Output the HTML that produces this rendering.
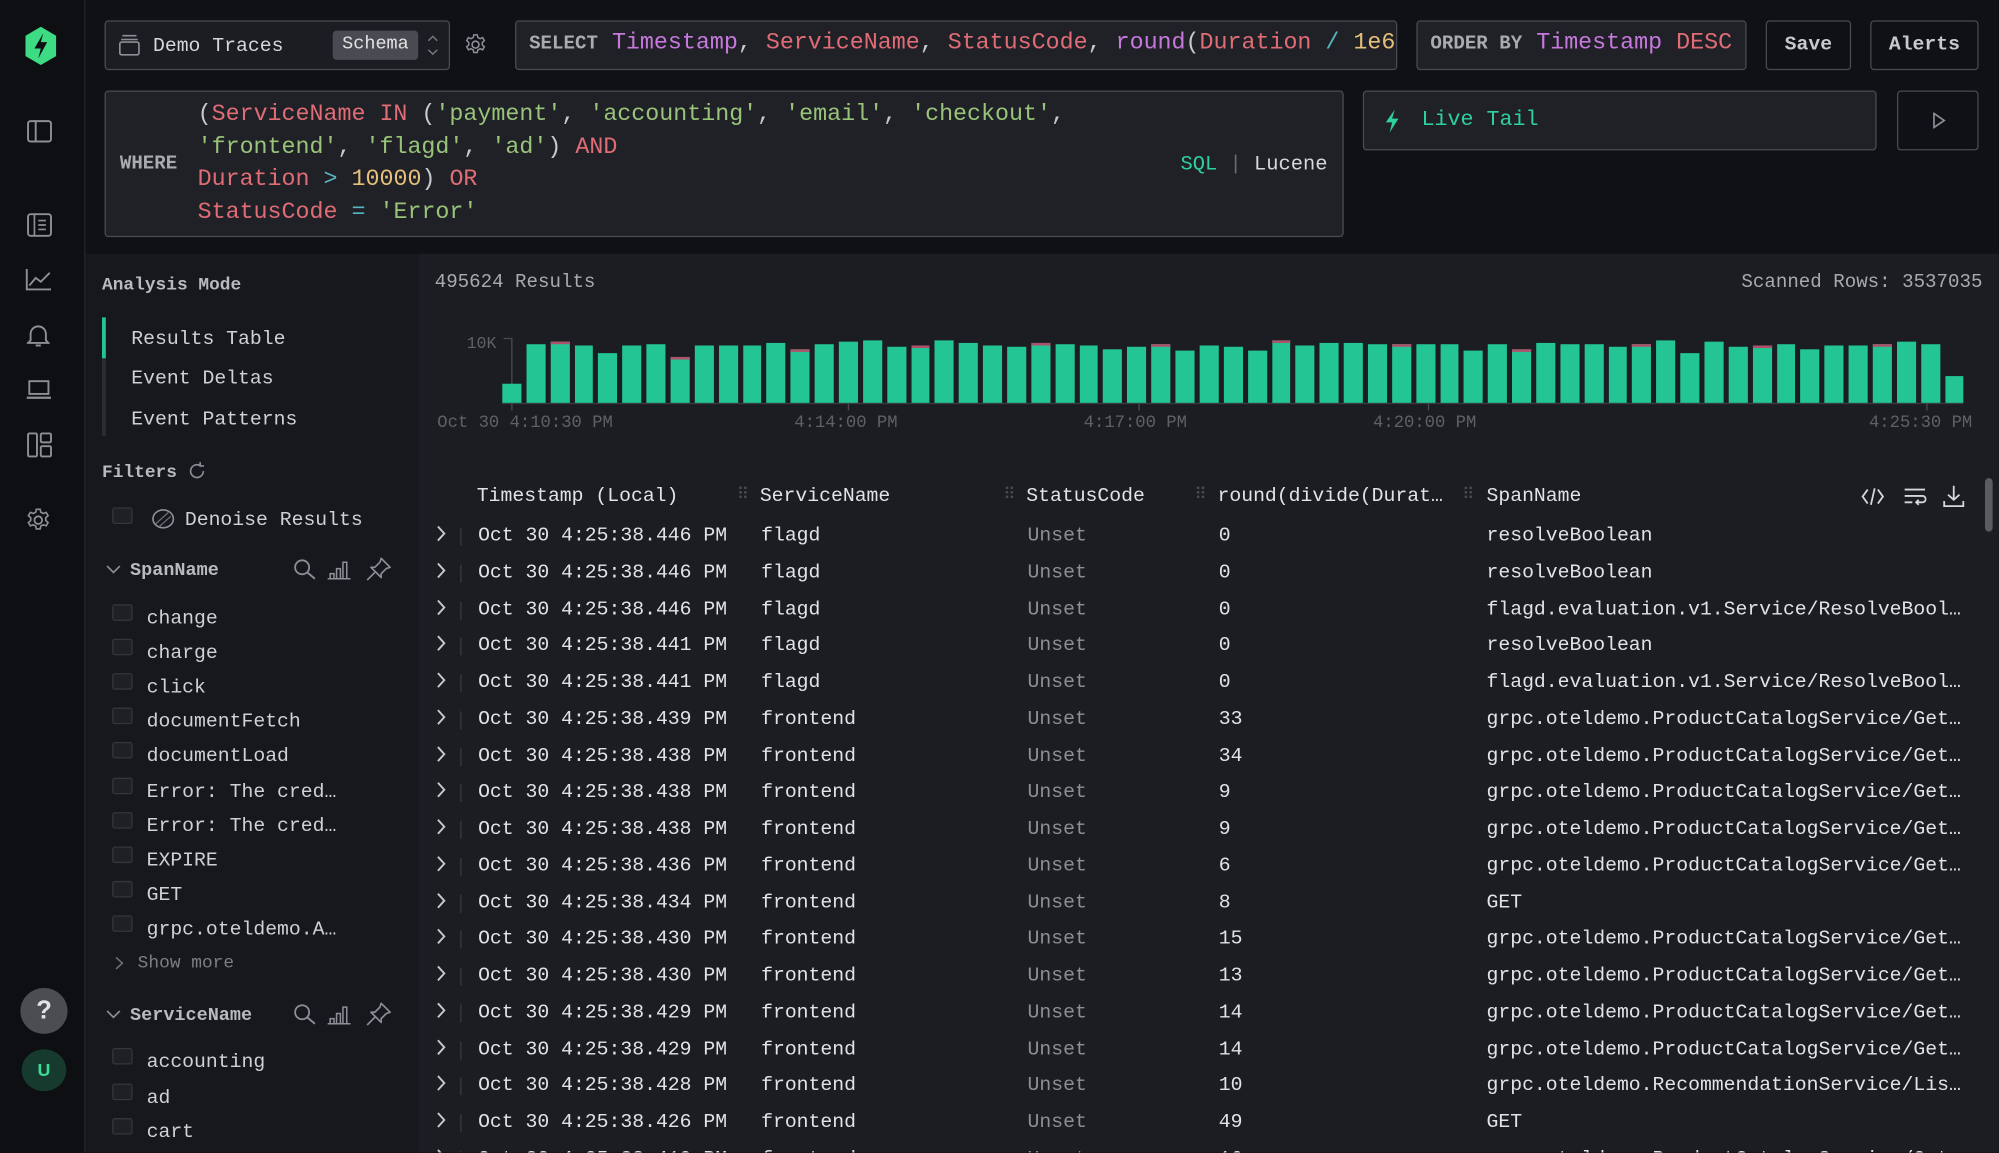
<!DOCTYPE html>
<html><head><meta charset="utf-8"><style>
*{box-sizing:border-box;margin:0;padding:0}
html,body{width:1999px;height:1153px;overflow:hidden;background:#0f1116}
#w{position:absolute;left:0;top:0;width:1568px;height:904px;transform:scale(1.27487);transform-origin:0 0;background:#0f1116;font-family:"Liberation Mono",monospace;color:#d6d7da;overflow:hidden}
.a{position:absolute;white-space:nowrap}
.box{position:absolute;background:#202127;border:1px solid #4a4b50;border-radius:3px}
.kw{color:#a9abb0;font-weight:bold}
.p{color:#c678dd}.r{color:#e06c75}.g{color:#98c379}.y{color:#e5c07b}.t{color:#56b6c2}.w{color:#c8c9cc}
.nav{position:absolute;left:0;top:0;width:67px;height:904px;background:#0d0f12;border-right:1px solid #24262b}
.lp{position:absolute;left:67px;top:199px;width:261px;height:705px;background:#16181d}
.mp{position:absolute;left:328px;top:199px;width:1240px;height:705px;background:#1b1d23}
.cb{position:absolute;width:16px;height:13px;border:1px solid #34363c;background:#1e2026;border-radius:2px}
.it{font-size:15.5px;color:#d0d1d4}
.row{position:absolute;left:338px;font-size:15.5px;color:#e2e3e6;height:28px;width:1210px}
.row span{position:absolute;top:0}
</style></head><body><div id="w">

<div class="nav">
 <svg class="a" style="left:19px;top:20px" width="26" height="32" viewBox="0 0 26 32"><polygon points="13,1 25,8 25,24 13,31 1,24 1,8" fill="#3ddc84"/><path d="M15 6 L8 18 H13 L11 26 L18 13 H13 Z" fill="#0d0f12"/></svg>
 <svg class="a" style="left:21px;top:94px" width="20" height="18"><rect x="1" y="1" width="18" height="16" rx="2" fill="none" stroke="#8c8f95" stroke-width="1.5"/><line x1="7" y1="1" x2="7" y2="17" stroke="#8c8f95" stroke-width="1.5"/></svg>
 <svg class="a" style="left:21px;top:167px" width="20" height="19"><rect x="1" y="1" width="18" height="17" rx="2" fill="none" stroke="#8c8f95" stroke-width="1.5"/><path d="M6 1V18M9 6H15M9 9.5H15M9 13H15" stroke="#8c8f95" stroke-width="1.3"/></svg>
 <svg class="a" style="left:20px;top:210px" width="21" height="18"><path d="M1 1V17H20M3 14L8 8L12 11L19 4" fill="none" stroke="#8c8f95" stroke-width="1.5"/></svg>
 <svg class="a" style="left:21px;top:253px" width="18" height="20"><path d="M3 14V9a6 6 0 0 1 12 0v5l2 2H1z M7 18h4" fill="none" stroke="#8c8f95" stroke-width="1.5"/></svg>
 <svg class="a" style="left:20px;top:298px" width="21" height="16"><rect x="3" y="1" width="15" height="10" fill="none" stroke="#8c8f95" stroke-width="1.5"/><path d="M1 14H20" stroke="#8c8f95" stroke-width="1.8"/></svg>
 <svg class="a" style="left:21px;top:339px" width="20" height="20"><rect x="1" y="1" width="7" height="18" rx="1" fill="none" stroke="#8c8f95" stroke-width="1.5"/><rect x="11" y="1" width="8" height="7" rx="1" fill="none" stroke="#8c8f95" stroke-width="1.5"/><rect x="11" y="11" width="8" height="8" rx="1" fill="none" stroke="#8c8f95" stroke-width="1.5"/></svg>
 <svg class="a" style="left:20px;top:398px" width="20" height="20" viewBox="0 0 20 20"><circle cx="10" cy="10" r="3" fill="none" stroke="#8c8f95" stroke-width="1.4"/><path d="M8.5 1.5h3l.5 2.3 2 1 2.2-.9 1.5 2.6-1.8 1.6v2.2l1.8 1.6-1.5 2.6-2.2-.9-2 1-.5 2.3h-3l-.5-2.3-2-1-2.2.9-1.5-2.6 1.8-1.6V8.1L2.3 6.5l1.5-2.6 2.2.9 2-1z" fill="none" stroke="#8c8f95" stroke-width="1.3"/></svg>
 <div class="a" style="left:16px;top:775px;width:37px;height:36px;border-radius:50%;background:#4b4d53;color:#e4e4e6;font:bold 20px 'Liberation Sans',sans-serif;text-align:center;line-height:36px">?</div>
 <div class="a" style="left:17px;top:823px;width:35px;height:33px;border-radius:50%;background:#163a2d;color:#3ddc97;font:bold 14px 'Liberation Sans',sans-serif;text-align:center;line-height:33px">U</div>
</div>

<div class="box" style="left:82px;top:16px;width:271px;height:39px;background:#1c1d22">
 <svg class="a" style="left:10px;top:10px" width="17" height="17"><path d="M3 1H14M2 4H15" stroke="#8c8f95" stroke-width="1.2"/><rect x="1" y="6" width="15" height="10" rx="1.5" fill="none" stroke="#8c8f95" stroke-width="1.3"/></svg>
 <div class="a" style="left:37px;top:10px;font-size:15.5px;color:#d6d7da">Demo Traces</div>
 <div class="a" style="left:178px;top:7px;width:67px;height:23px;background:#4a4b52;border-radius:3px;font-size:14.5px;text-align:center;line-height:23px;color:#e2e2e4">Schema</div>
 <svg class="a" style="left:252px;top:10px" width="9" height="17"><path d="M1 5L4.5 1.5L8 5M1 12L4.5 15.5L8 12" fill="none" stroke="#77797e" stroke-width="1.1"/></svg>
</div>
<svg class="a" style="left:364px;top:26px" width="18" height="18" viewBox="0 0 20 20"><circle cx="10" cy="10" r="3" fill="none" stroke="#8c8f95" stroke-width="1.4"/><path d="M8.5 1.5h3l.5 2.3 2 1 2.2-.9 1.5 2.6-1.8 1.6v2.2l1.8 1.6-1.5 2.6-2.2-.9-2 1-.5 2.3h-3l-.5-2.3-2-1-2.2.9-1.5-2.6 1.8-1.6V8.1L2.3 6.5l1.5-2.6 2.2.9 2-1z" fill="none" stroke="#8c8f95" stroke-width="1.3"/></svg>
<div class="box" style="left:404px;top:16px;width:692px;height:39px;overflow:hidden">
 <div class="a" style="left:10px;top:7px;font-size:18.3px"><span class="kw" style="font-size:15px">SELECT</span> <span class="p">Timestamp</span><span class="w">,</span> <span class="r">ServiceName</span><span class="w">,</span> <span class="r">StatusCode</span><span class="w">,</span> <span class="p">round</span><span class="w">(</span><span class="r">Duration</span> <span class="t">/</span> <span class="y">1e6</span></div>
</div>
<div class="box" style="left:1111px;top:16px;width:259px;height:39px;overflow:hidden">
 <div class="a" style="left:10px;top:7px;font-size:18.3px"><span class="kw" style="font-size:15px">ORDER BY</span> <span class="p">Timestamp</span> <span class="r">DESC</span></div>
</div>
<div class="box" style="left:1385px;top:16px;width:67px;height:39px;background:#0f1116;text-align:center;line-height:37px;font-size:15.5px;font-weight:bold;color:#c8c9cc">Save</div>
<div class="box" style="left:1467px;top:16px;width:85px;height:39px;background:#0f1116;text-align:center;line-height:37px;font-size:15.5px;font-weight:bold;color:#c8c9cc">Alerts</div>

<div class="box" style="left:82px;top:71px;width:972px;height:115px">
 <div class="a kw" style="left:11px;top:48px;font-size:15px">WHERE</div>
 <div class="a" style="left:72px;top:6px;font-size:18.3px;line-height:25.7px">
 <span class="w">(</span><span class="r">ServiceName IN</span> <span class="w">(</span><span class="g">'payment'</span><span class="w">,</span> <span class="g">'accounting'</span><span class="w">,</span> <span class="g">'email'</span><span class="w">,</span> <span class="g">'checkout'</span><span class="w">,</span><br>
 <span class="g">'frontend'</span><span class="w">,</span> <span class="g">'flagd'</span><span class="w">,</span> <span class="g">'ad'</span><span class="w">)</span> <span class="r">AND</span><br>
 <span class="r">Duration</span> <span class="t">&gt;</span> <span class="y">10000</span><span class="w">)</span> <span class="r">OR</span><br>
 <span class="r">StatusCode</span> <span class="t">=</span> <span class="g">'Error'</span></div>
 <div class="a" style="left:843px;top:48px;font-size:16px"><span style="color:#2fd19b">SQL</span> <span style="color:#6a6c71">|</span> <span style="color:#d6d7da">Lucene</span></div>
</div>
<div class="box" style="left:1069px;top:71px;width:403px;height:47px">
 <svg class="a" style="left:16px;top:14px" width="12" height="18"><path d="M8 0L1 10H6L4 18L11 7H6Z" fill="#2fd19b"/></svg>
 <div class="a" style="left:45px;top:13px;font-size:17px;color:#2fd19b">Live Tail</div>
</div>
<div class="box" style="left:1488px;top:71px;width:64px;height:47px;background:#0f1116">
 <svg class="a" style="left:27px;top:16px" width="10" height="13"><path d="M1 1L9 6.5L1 12Z" fill="none" stroke="#8c8f95" stroke-width="1.3"/></svg>
</div>

<div class="lp">
 <div class="a" style="left:13px;top:17px;font-size:14px;font-weight:bold;color:#b8babe">Analysis Mode</div>
 <div class="a" style="left:13px;top:50px;width:3px;height:93px;background:#2a2c31"></div>
 <div class="a" style="left:13px;top:50px;width:3px;height:32px;background:#22c593"></div>
 <div class="a it" style="left:36px;top:58px">Results Table</div>
 <div class="a it" style="left:36px;top:89px">Event Deltas</div>
 <div class="a it" style="left:36px;top:121px">Event Patterns</div>
 <div class="a" style="left:13px;top:164px;font-size:14px;font-weight:bold;color:#b8babe">Filters</div>
 <svg class="a" style="left:80px;top:163px" width="15" height="15"><path d="M12.5 7.5A5 5 0 1 1 10 3.2M10 0.5V3.5H13" fill="none" stroke="#8c8f95" stroke-width="1.3"/></svg>
 <div class="cb" style="left:21px;top:199px"></div>
 <svg class="a" style="left:52px;top:200px" width="18" height="16"><ellipse cx="9" cy="8" rx="8" ry="7" fill="none" stroke="#8c8f95" stroke-width="1.3"/><path d="M3 12L13 3M6 14L15 6" stroke="#6a6c71"/></svg>
 <div class="a it" style="left:78px;top:200px">Denoise Results</div>

 <svg class="a" style="left:16px;top:244px" width="12" height="8"><path d="M1 1L6 6L11 1" fill="none" stroke="#8c8f95" stroke-width="1.3"/></svg>
 <div class="a" style="left:35px;top:241px;font-size:14.5px;font-weight:bold;color:#b8babe">SpanName</div>
 <svg class="a" style="left:163px;top:239px" width="18" height="18"><circle cx="7" cy="7" r="5.5" fill="none" stroke="#8c8f95" stroke-width="1.4"/><path d="M11 11L17 16" stroke="#8c8f95" stroke-width="1.5"/></svg>
 <svg class="a" style="left:189px;top:238px" width="20" height="18"><path d="M1 17H19M3 17V13H6V17M8 17V9H11V17M13 17V4H16V17" fill="none" stroke="#8c8f95" stroke-width="1.2"/></svg>
 <svg class="a" style="left:220px;top:238px" width="20" height="19"><path d="M12 1L19 8L16 9L12 13L12 16L4 8L7 8L11 4Z M7 12L1 18" fill="none" stroke="#8c8f95" stroke-width="1.3" stroke-linejoin="round"/></svg>

 <div class="cb" style="left:21px;top:275px"></div><div class="a it" style="left:48px;top:277px">change</div>
 <div class="cb" style="left:21px;top:302px"></div><div class="a it" style="left:48px;top:304px">charge</div>
 <div class="cb" style="left:21px;top:329px"></div><div class="a it" style="left:48px;top:331px">click</div>
 <div class="cb" style="left:21px;top:356px"></div><div class="a it" style="left:48px;top:358px">documentFetch</div>
 <div class="cb" style="left:21px;top:383px"></div><div class="a it" style="left:48px;top:385px">documentLoad</div>
 <div class="cb" style="left:21px;top:411px"></div><div class="a it" style="left:48px;top:413px">Error: The cred…</div>
 <div class="cb" style="left:21px;top:438px"></div><div class="a it" style="left:48px;top:440px">Error: The cred…</div>
 <div class="cb" style="left:21px;top:465px"></div><div class="a it" style="left:48px;top:467px">EXPIRE</div>
 <div class="cb" style="left:21px;top:492px"></div><div class="a it" style="left:48px;top:494px">GET</div>
 <div class="cb" style="left:21px;top:519px"></div><div class="a it" style="left:48px;top:521px">grpc.oteldemo.A…</div>
 <svg class="a" style="left:23px;top:551px" width="7" height="11"><path d="M1 1L6 5.5L1 10" fill="none" stroke="#6f7176" stroke-width="1.2"/></svg>
 <div class="a" style="left:41px;top:549px;font-size:14px;color:#7d7f84">Show more</div>

 <svg class="a" style="left:16px;top:593px" width="12" height="8"><path d="M1 1L6 6L11 1" fill="none" stroke="#8c8f95" stroke-width="1.3"/></svg>
 <div class="a" style="left:35px;top:590px;font-size:14.5px;font-weight:bold;color:#b8babe">ServiceName</div>
 <svg class="a" style="left:163px;top:588px" width="18" height="18"><circle cx="7" cy="7" r="5.5" fill="none" stroke="#8c8f95" stroke-width="1.4"/><path d="M11 11L17 16" stroke="#8c8f95" stroke-width="1.5"/></svg>
 <svg class="a" style="left:189px;top:587px" width="20" height="18"><path d="M1 17H19M3 17V13H6V17M8 17V9H11V17M13 17V4H16V17" fill="none" stroke="#8c8f95" stroke-width="1.2"/></svg>
 <svg class="a" style="left:220px;top:587px" width="20" height="19"><path d="M12 1L19 8L16 9L12 13L12 16L4 8L7 8L11 4Z M7 12L1 18" fill="none" stroke="#8c8f95" stroke-width="1.3" stroke-linejoin="round"/></svg>
 <div class="cb" style="left:21px;top:623px"></div><div class="a it" style="left:48px;top:625px">accounting</div>
 <div class="cb" style="left:21px;top:651px"></div><div class="a it" style="left:48px;top:653px">ad</div>
 <div class="cb" style="left:21px;top:678px"></div><div class="a it" style="left:48px;top:680px">cart</div>
</div>

<div class="mp">
 <div class="a" style="left:13px;top:14px;font-size:15px;color:#a8aaae">495624 Results</div>
 <div class="a" style="right:13px;top:14px;font-size:15px;color:#a8aaae">Scanned Rows: 3537035</div>
 <div class="a" style="left:38px;top:63px;font-size:13px;color:#5f6166">10K</div>
 <div class="a" style="left:73px;top:66px;width:1px;height:51px;background:#4a4c51"></div>
 <div class="a" style="left:67px;top:66px;width:6px;height:1px;background:#4a4c51"></div>
 <div class="a" style="left:66px;top:117px;width:1146px;height:1px;background:#3a3c41"></div>
 <div class="a" id="bars" style="left:66px;top:61px;width:1146px;height:56px;display:flex;align-items:flex-end;gap:4px"></div>
 <div class="a" style="left:73px;top:117px;width:1px;height:6px;background:#4a4c51"></div>
 <div class="a" style="left:337px;top:117px;width:1px;height:6px;background:#4a4c51"></div>
 <div class="a" style="left:565px;top:117px;width:1px;height:6px;background:#4a4c51"></div>
 <div class="a" style="left:792px;top:117px;width:1px;height:6px;background:#4a4c51"></div>
 <div class="a" style="left:1183px;top:117px;width:1px;height:6px;background:#4a4c51"></div>
 <div class="a" style="left:15px;top:126px;font-size:13.5px;color:#5f6166">Oct 30 4:10:30 PM</div>
 <div class="a" style="left:295px;top:126px;font-size:13.5px;color:#5f6166">4:14:00 PM</div>
 <div class="a" style="left:522px;top:126px;font-size:13.5px;color:#5f6166">4:17:00 PM</div>
 <div class="a" style="left:749px;top:126px;font-size:13.5px;color:#5f6166">4:20:00 PM</div>
 <div class="a" style="left:1138px;top:126px;font-size:13.5px;color:#5f6166">4:25:30 PM</div>

 <div class="a" style="left:46px;top:181px;font-size:15.5px;color:#e2e3e6">Timestamp (Local)</div>
 <div class="a" style="left:250px;top:182px;font-size:13px;color:#4a4c51">⠿</div>
 <div class="a" style="left:268px;top:181px;font-size:15.5px;color:#e2e3e6">ServiceName</div>
 <div class="a" style="left:459px;top:182px;font-size:13px;color:#4a4c51">⠿</div>
 <div class="a" style="left:477px;top:181px;font-size:15.5px;color:#e2e3e6">StatusCode</div>
 <div class="a" style="left:609px;top:182px;font-size:13px;color:#4a4c51">⠿</div>
 <div class="a" style="left:627px;top:181px;font-size:15.5px;color:#e2e3e6">round(divide(Durat…</div>
 <div class="a" style="left:819px;top:182px;font-size:13px;color:#4a4c51">⠿</div>
 <div class="a" style="left:838px;top:181px;font-size:15.5px;color:#e2e3e6">SpanName</div>
 <svg class="a" style="left:1132px;top:183px" width="18" height="15"><path d="M5 2L1 7.5L5 13M13 2L17 7.5L13 13M10.5 1L7.5 14" fill="none" stroke="#d6d7da" stroke-width="1.4"/></svg>
 <svg class="a" style="left:1165px;top:183px" width="18" height="15"><path d="M1 2H17M1 7H15a2.5 2.5 0 0 1 0 5H10M12 10L10 12L12 14M1 12H7" fill="none" stroke="#d6d7da" stroke-width="1.4"/></svg>
 <svg class="a" style="left:1196px;top:181px" width="17" height="18"><path d="M8.5 1V12M4 8L8.5 12L13 8M1 13V17H16V13" fill="none" stroke="#d6d7da" stroke-width="1.4"/></svg>
 <div class="a" style="left:1229px;top:176px;width:6px;height:42px;border-radius:3px;background:#5a5c61"></div>
</div>

<div id="rows"></div>
</div>
<script>
var h=[15,46,48,45,39,45,46,36,45,45,45,47,42,46,48,49,44,45,49,47,45,44,47,46,45,42,44,46,41,45,44,41,49,45,47,47,46,46,46,46,41,46,42,47,46,46,44,46,49,39,48,44,45,46,42,45,45,46,48,46,21];
var b=document.getElementById('bars');
h.forEach(function(v,i){var d=document.createElement('div');d.style.cssText='flex:1;height:'+v+'px;background:#22c593;'+((i%5==2)?'border-top:2px solid #b0506a':'');b.appendChild(d);});
var R=[["446","flagd","0","resolveBoolean"],["446","flagd","0","resolveBoolean"],["446","flagd","0","flagd.evaluation.v1.Service/ResolveBool…"],["441","flagd","0","resolveBoolean"],["441","flagd","0","flagd.evaluation.v1.Service/ResolveBool…"],["439","frontend","33","grpc.oteldemo.ProductCatalogService/Get…"],["438","frontend","34","grpc.oteldemo.ProductCatalogService/Get…"],["438","frontend","9","grpc.oteldemo.ProductCatalogService/Get…"],["438","frontend","9","grpc.oteldemo.ProductCatalogService/Get…"],["436","frontend","6","grpc.oteldemo.ProductCatalogService/Get…"],["434","frontend","8","GET"],["430","frontend","15","grpc.oteldemo.ProductCatalogService/Get…"],["430","frontend","13","grpc.oteldemo.ProductCatalogService/Get…"],["429","frontend","14","grpc.oteldemo.ProductCatalogService/Get…"],["429","frontend","14","grpc.oteldemo.ProductCatalogService/Get…"],["428","frontend","10","grpc.oteldemo.RecommendationService/Lis…"],["426","frontend","49","GET"],["419","frontend","16","grpc.oteldemo.ProductCatalogService/Get…"]];
var s='';R.forEach(function(r,i){var y=411+i*28.75;s+='<div class="row" style="top:'+y+'px"><svg style="position:absolute;left:4px;top:1px" width="8" height="13"><path d="M1.5 1L6.5 6.5L1.5 12" fill="none" stroke="#c8c9cc" stroke-width="1.5"/></svg><span style="left:23px;top:3px;width:1px;height:14px;background:#3a3c41"></span><span style="left:37px">Oct 30 4:25:38.'+r[0]+' PM</span><span style="left:259px">'+r[1]+'</span><span style="left:468px;color:#8d8f94">Unset</span><span style="left:618px">'+r[2]+'</span><span style="left:828px">'+r[3]+'</span></div>';});
document.getElementById('rows').innerHTML=s;
</script>
</body></html>
